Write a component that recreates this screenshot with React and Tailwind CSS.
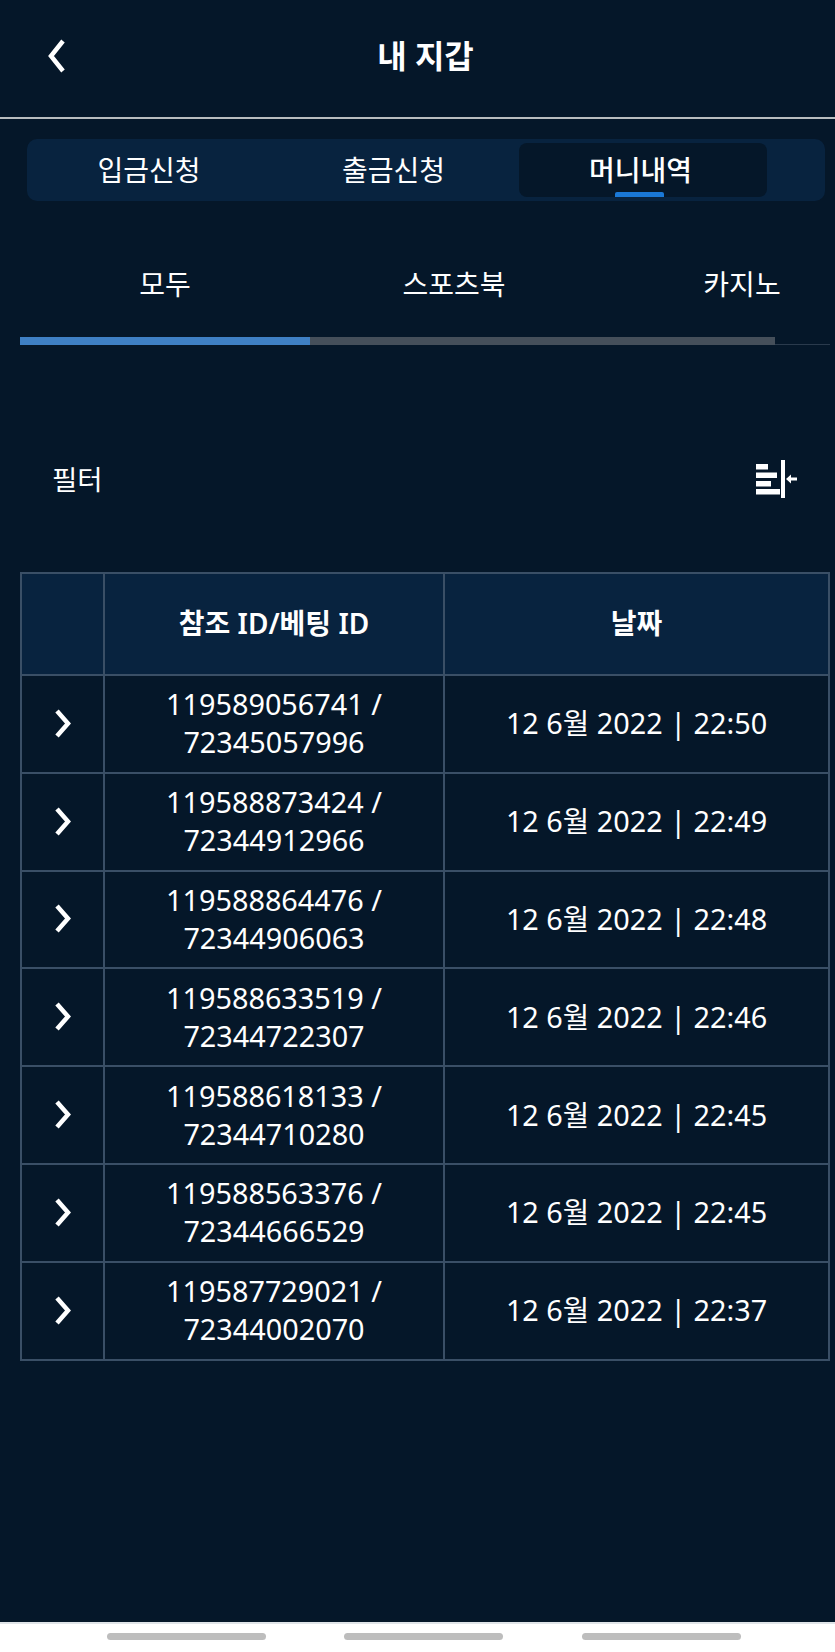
import React from "react";

const rows = [
  ["119589056741", "72345057996", "22:50"],
  ["119588873424", "72344912966", "22:49"],
  ["119588864476", "72344906063", "22:48"],
  ["119588633519", "72344722307", "22:46"],
  ["119588618133", "72344710280", "22:45"],
  ["119588563376", "72344666529", "22:45"],
  ["119587729021", "72344002070", "22:37"],
];

const font = { fontFamily: '"Noto Sans", "Noto Sans CJK KR", sans-serif' };

function Chevron({ left }) {
  return (
    <svg width="20" height="36" viewBox="0 0 20 36" fill="none" stroke="white" strokeWidth="4.5" strokeLinecap="butt">
      <path d={left ? "M17 3 L5 18 L17 33" : "M4 5 L15 17.5 L4 30"} />
    </svg>
  );
}

function CollapseIcon() {
  return (
    <svg width="42" height="38" viewBox="0 0 42 38" fill="white">
      <rect x="1" y="4" width="12" height="5.5" />
      <rect x="1" y="12.5" width="21" height="5.5" />
      <rect x="1" y="21" width="15" height="5.5" />
      <rect x="1" y="29" width="24" height="5.5" />
      <rect x="26" y="0" width="4" height="38" />
      <rect x="35" y="17.5" width="7" height="3" />
      <path d="M31 19 L36 14.5 L36 23.5 Z" />
    </svg>
  );
}

export default function App() {
  return (
    <div className="relative flex h-[1652px] w-[835px] flex-col overflow-hidden bg-[#051729] text-white" style={font}>
      <header className="relative flex h-[119px] items-center justify-center border-b-2 border-[#b9bdbf] pb-[5px]">
        <div className="absolute left-[46px] top-[38px]"><Chevron left /></div>
        <h1 className="ml-[16px] text-[32px] font-semibold leading-none">내 지갑</h1>
      </header>

      <nav className="mx-[27px] mt-[20px] flex h-[62px] w-[798px] items-center rounded-[10px] bg-[#08233f]">
        <div className="flex h-[54px] w-[244px] items-center justify-center text-[28px] leading-none">입금신청</div>
        <div className="flex h-[54px] w-[245px] items-center justify-center text-[28px] leading-none">출금신청</div>
        <div className="relative ml-[3px] flex h-[54px] w-[248px] items-center justify-center rounded-[8px] bg-[#051729] pr-[5px] text-[28px] font-medium leading-none">
          머니내역
          <span className="absolute bottom-0 left-[96px] h-[5px] w-[49px] rounded-t-[2px] bg-[#1a78d6]" />
        </div>
      </nav>

      <div className="relative ml-[20px] mr-[5px] mt-[52px] h-[113px] overflow-hidden">
        <div className="flex h-[62px] w-[866px] items-center text-[28px] leading-none">
          <div className="w-[290px] text-center">모두</div>
          <div className="w-[288px] text-center">스포츠북</div>
          <div className="w-[288px] text-center">카지노</div>
        </div>
        <div className="absolute left-0 right-0 top-[91px] h-px bg-[#2a3a4c]" />
        <div className="absolute left-0 top-[84px] h-[8px] w-[755px] bg-[#454f5a]">
          <div className="h-full w-[290px] bg-[#3f80c4]" />
        </div>
      </div>

      <div className="ml-[52px] mr-[53px] mt-[94px] flex h-[40px] items-center justify-between">
        <span className="text-[27.5px] leading-none">필터</span>
        <span className="mr-[-15px] mt-[-2px]"><CollapseIcon /></span>
      </div>

      <table className="ml-[20px] mt-[72px] w-[809px] table-fixed border-collapse border-2 border-[#3a4f66]">
        <colgroup>
          <col className="w-[83px]" />
          <col className="w-[340px]" />
          <col className="w-[385px]" />
        </colgroup>
        <thead>
          <tr className="h-[102px] bg-[#08233f]">
            <th className="border-2 border-[#3a4f66]" />
            <th className="border-2 border-[#3a4f66] pb-[2px] text-[28px] font-semibold">참조 ID/베팅 ID</th>
            <th className="border-2 border-[#3a4f66] pb-[2px] text-[28px] font-semibold">날짜</th>
          </tr>
        </thead>
        <tbody>
          {rows.map((r) => (
            <tr key={r[0]} className="h-[97.8px]">
              <td className="border-2 border-[#3a4f66]">
                <div className="flex justify-center"><Chevron /></div>
              </td>
              <td className="border-2 border-[#3a4f66] pb-[1px] text-center text-[28.8px] leading-[38px]">
                {r[0]} /<br />{r[1]}
              </td>
              <td className="border-2 border-[#3a4f66] pb-[1px] text-center text-[28.8px] leading-[38px]">
                12 6월 2022 | {r[2]}
              </td>
            </tr>
          ))}
        </tbody>
      </table>

      <footer className="absolute bottom-0 left-0 right-0 flex h-[30px] border-t-2 border-[#dfe4e8] bg-white pt-[9px]">
        <span className="ml-[107px] h-[7px] w-[159px] rounded-full bg-[#bdbdbd]" />
        <span className="ml-[78px] h-[7px] w-[159px] rounded-full bg-[#bdbdbd]" />
        <span className="ml-[79px] h-[7px] w-[159px] rounded-full bg-[#bdbdbd]" />
      </footer>
    </div>
  );
}
